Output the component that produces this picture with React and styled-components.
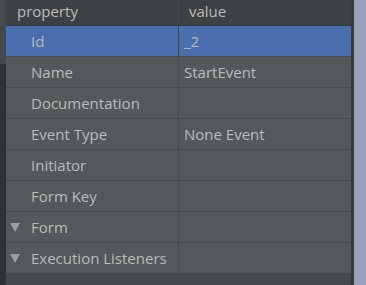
import styled, { createGlobalStyle } from 'styled-components';

const GlobalStyle = createGlobalStyle`
  html, body {
    margin: 0;
    padding: 0;
    background: #46494b;
  }
`;

const Page = styled.div`
  display: flex;
  width: 366px;
  height: 285px;
  overflow: hidden;
  font-family: 'Open Sans', 'Noto Sans', sans-serif;
  font-size: 15px;
  color: #bbbbbb;
`;

const SideStrip = styled.div`
  width: 6px;
  display: flex;
  flex-direction: column;
`;

const SideTop = styled.div`
  height: 64px;
  background: #46494b;
`;

const SideBottom = styled.div`
  flex: 1;
  background: #2f3133;
`;

const Panel = styled.div`
  width: 345px;
  display: flex;
  flex-direction: column;
  background: #46494b;
`;

const Row = styled.div`
  display: grid;
  grid-template-columns: 173px 1fr;
  height: ${p => (p.$header ? 25 : 30)}px;
  border-bottom: 1px solid ${p => (p.$header ? '#333537' : '#45494b')};
  background: ${p => (p.$header ? '#3e4143' : p.$selected ? '#4b6eaf' : '#53585a')};
`;

const Cell = styled.div`
  display: flex;
  align-items: center;
  padding-left: ${p => p.$pad}px;
  border-right: ${p => (p.$first ? '1px solid #45494b' : 'none')};
  white-space: nowrap;
  line-height: 1;
  padding-bottom: ${p => (p.$header ? 2 : 0)}px;
  padding-top: ${p => (p.$header ? 0 : 1)}px;
`;

const Caret = styled.svg`
  width: 10px;
  height: 9px;
  margin-left: -21px;
  margin-right: 11px;
  flex: none;
`;

const Rest = styled.div`
  flex: 1;
  background: #46494b;
`;

const Divider = styled.div`
  width: 3px;
  background: #37393b;
`;

const Scroll = styled.div`
  flex: 1;
  background: #9aa0b9;
`;

const rows = [
  { name: 'Id', value: '_2', selected: true },
  { name: 'Name', value: 'StartEvent' },
  { name: 'Documentation', value: '' },
  { name: 'Event Type', value: 'None Event' },
  { name: 'Initiator', value: '' },
  { name: 'Form Key', value: '' },
  { name: 'Form', value: '', group: true },
  { name: 'Execution Listeners', value: '', group: true },
];

const App = () => {
  return (
    <>
      <GlobalStyle />
      <Page>
        <SideStrip>
          <SideTop />
          <SideBottom />
        </SideStrip>
        <Panel>
          <Row $header>
            <Cell $first $header $pad={11}>property</Cell>
            <Cell $header $pad={10}>value</Cell>
          </Row>
          {rows.map(r => (
            <Row key={r.name} $selected={r.selected}>
              <Cell $first $pad={25}>
                {r.group && (
                  <Caret viewBox="0 0 10 9">
                    <path d="M0 0 H10 L5 9 Z" fill="#9b9d9f" />
                  </Caret>
                )}
                {r.name}
              </Cell>
              <Cell $pad={5}>{r.value}</Cell>
            </Row>
          ))}
          <Rest />
        </Panel>
        <Divider />
        <Scroll />
      </Page>
    </>
  );
};

export default App;
